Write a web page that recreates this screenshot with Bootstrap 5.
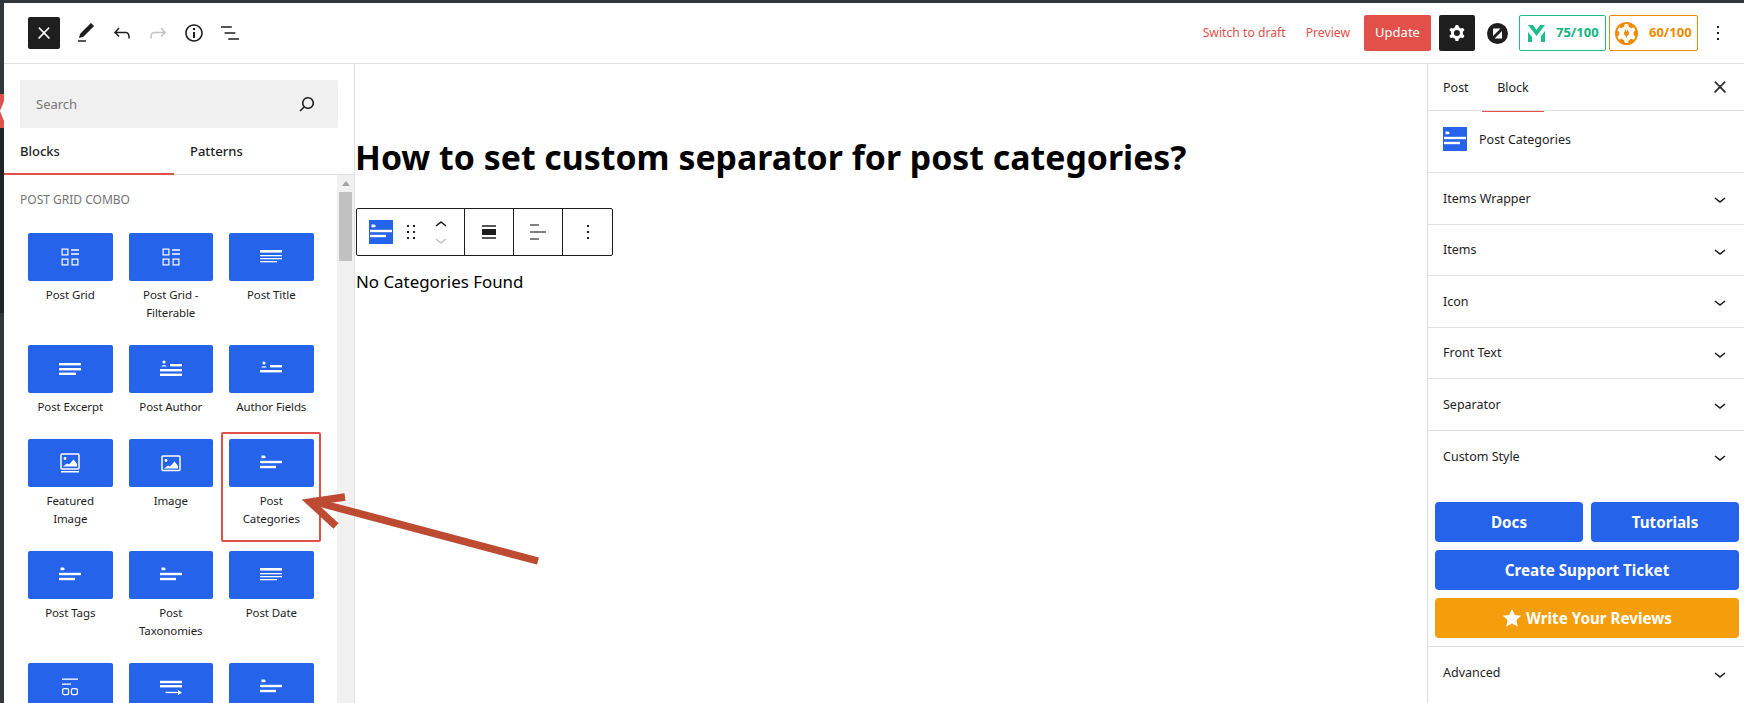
<!DOCTYPE html>
<html lang="en">
<head>
<meta charset="UTF-8">
<title>Edit Post</title>
<link href="https://cdn.jsdelivr.net/npm/bootstrap@5.3.0/dist/css/bootstrap.min.css" rel="stylesheet">
<style>
html, body { height: 703px; overflow: hidden; }
body { font-family: "Noto Sans", "Liberation Sans", sans-serif; color: #1e1e1e; background: #fff; font-size: 13px; }
svg { display: block; flex: none; }
.shell { height: 703px; position: relative; }
.strip-top { height: 3px; background: #32373c; }
.strip-left { width: 4px; flex: none; background: #1e2327; }
.strip-a { height: 91px; background: #32373c; }
.strip-b { height: 34px; background: #e2504a; }
.strip-c { height: 185px; }
.strip-d { flex-grow: 1; background: #32373c; }
.workspace { height: 700px; }
.editor { min-width: 0; }
.topbar { height: 61px; border-bottom: 1px solid #e0e0e0; padding-left: 24px; padding-right: 14px; }
.tool-close { width: 32px; height: 32px; background: #1e1e1e; border-radius: 2px; }
.tool-icon { margin-left: 12px; }
.tool-close + .tool-icon { margin-left: 14px; }
.close-bold { stroke-width: .9px; }
.link-red { color: #e2504a; font-size: 12.2px; text-decoration: none; }
.link-gap { margin-left: 20px; }
.btn-update { background: #e2504a; color: #fff; font-size: 13px; width: 67px; height: 36px; border-radius: 2px; padding: 0; border: 0; margin-left: 14px; }
.btn-cog { background: #1e1e1e; width: 36px; height: 36px; border-radius: 2px; padding: 0; border: 0; }
.circle-logo { margin: 0 11px 0 12px; }
.score-box { height: 36px; border-radius: 2px; font-size: 13px; font-weight: 700; background: #fff; gap: 11px; }
.score-green { width: 87px; border: 1px solid #1cbf8a; color: #13b583; padding-left: 8px; }
.score-orange { width: 89px; border: 1px solid #f08a00; color: #f08a00; padding-left: 5px; margin-left: 3px; }
.panels { height: 639px; min-height: 0; }
.inserter { width: 351px; flex: none; border-right: 1px solid #e0e0e0; }
.search-box { margin: 16px 16px 0; height: 48px; background: #f0f0f0; border-radius: 2px; padding: 0 19px 0 16px; color: #757575; }
.search-box span { padding-top: 2px; }
.tab-row { height: 47px; border-bottom: 1px solid #e0e0e0; }
.tab-left { width: 170px; padding-left: 16px; font-weight: 500; height: 47px; line-height: 47px; margin-bottom: -1px; }
.tab-active { border-bottom: 2px solid #e2504a; }
.tab-right { width: 175px; height: 47px; line-height: 47px; font-weight: 500; }
.tab-right span { display: block; padding-left: 16px; }
.block-scroll { min-height: 0; overflow: hidden; }
.block-list { padding: 17px 0 0 24px; min-width: 0; }
.cat-title { font-size: 12px; color: #757575; margin: 0 0 25px -8px; line-height: 16px; text-transform: uppercase; }
.block-grid { display: grid; grid-template-columns: repeat(3, 84.5px); column-gap: 16px; row-gap: 23px; }
.block-tile { height: 48px; background: #2563eb; border-radius: 2px; }
.block-label { font-size: 11.5px; letter-spacing: -.1px; line-height: 18px; margin-top: 5px; padding: 0 6px; text-align: center; }
.fake-scroll { width: 17px; flex: none; background: #f1f1f1; }
.fake-up { height: 17px; }
.fake-thumb { height: 69px; margin: 0 2px; background: #c1c1c1; }
.canvas { min-width: 0; }
.post-title { font-size: 33.85px; font-weight: 700; color: #000; line-height: 46px; margin: 70px 0 0 0; }
.block-bar { width: 257px; height: 48px; margin: 28px 0 0 1px; border: 1px solid #1e1e1e; border-radius: 2px; }
.bar-group { height: 100%; border-right: 1px solid #1e1e1e; }
.bar-group:last-child { border-right: 0; }
.bar-first { width: 108px; padding-left: 12px; }
.bar-cell { width: 49px; }
.drag-icon { margin-left: 6px; }
.mover { margin-left: 6px; }
.mover svg + svg { margin-top: -9px; }
.post-text { font-size: 16.9px; color: #000; margin: 13px 0 0 1px; line-height: 26px; }
.sidebar { width: 317px; flex: none; border-left: 1px solid #e0e0e0; }
.side-tabs { height: 47px; border-bottom: 1px solid #e0e0e0; padding-right: 15px; }
.side-tab { height: 47px; line-height: 47px; font-size: 12.5px; }
.side-post { padding-left: 15px; width: 54px; }
.side-block { width: 62px; text-align: center; border-bottom: 1px solid #e2504a; margin-bottom: -1px; height: 48px; }
.side-head { height: 62px; border-bottom: 1px solid #e0e0e0; padding: 0 0 5px 15px; }
.side-head span { margin-left: 12px; padding-top: 2px; font-size: 12.5px; }
.pick-tile { width: 24px; height: 24px; background: #2563eb; }
.panel-row.list-group-item { height: 51.5px; padding: 2px 12px 0 15px; border: 0; border-bottom: 1px solid #e0e0e0; color: #1e1e1e; font-size: 12.5px; border-radius: 0; }
.panel-row.row-plain { border-bottom: 0; }
.side-btns { padding: 20px 5px 8px 7px; border-bottom: 1px solid #e0e0e0; }
.btn-side { height: 40px; background: #2563eb; color: #fff; font-weight: 700; font-size: 15.200px; border: 0; border-radius: 4px; padding: 0; line-height: 40px; }
.btn-half { flex: 1 1 0; }
.btn-amber { background: #f59e0b; }
.btn-side:hover { color: #fff; }
.red-frame { position: absolute; left: 221px; top: 432px; width: 100px; height: 110px; border: 2px solid #e2504a; border-radius: 2px; pointer-events: none; }
.arrow-over { position: absolute; left: 290px; top: 480px; pointer-events: none; }
.strip-x { position: absolute; left: 0; top: 94px; pointer-events: none; }
</style>
</head>
<body>
<svg width="0" height="0" class="position-absolute">
  <defs>
    <symbol id="i-close" viewBox="0 0 24 24"><path d="M13 11.8l6.1-6.3-1-1-6.1 6.2-6.1-6.2-1 1 6.1 6.3-6.5 6.7 1 1 6.5-6.6 6.5 6.6 1-1z"/></symbol>
    <symbol id="i-edit" viewBox="0 0 24 24"><path d="M20.1 5.1L16.9 2 6.2 12.7l-1.3 4.4 4.5-1.3L20.1 5.1zM4 20.8h8v-1.5H4v1.5z"/></symbol>
    <symbol id="i-undo" viewBox="0 0 24 24"><path d="M18.3 11.7c-.6-.6-1.4-.9-2.3-.9H6.7l2.9-3.3-1.1-1-4.5 5L8.5 16l1-1-2.7-2.7H16c.5 0 .9.2 1.3.5 1 1 1 3.4 1 4.5v.3h1.5v-.2c0-1.5 0-4.3-1.5-5.7z"/></symbol>
    <symbol id="i-redo" viewBox="0 0 24 24"><path d="M15.6 6.5l-1.1 1 2.9 3.3H8c-.9 0-1.7.3-2.3.9-1.4 1.5-1.4 4.2-1.4 5.6v.2h1.5v-.3c0-1.1 0-3.5 1-4.5.3-.3.7-.5 1.3-.5h9.2L14.5 15l1.1 1.1 4.6-4.6-4.6-5z"/></symbol>
    <symbol id="i-info" viewBox="0 0 24 24"><path d="M12 3.2c-4.8 0-8.8 3.9-8.8 8.8 0 4.8 3.9 8.8 8.8 8.8 4.8 0 8.8-3.9 8.8-8.8 0-4.8-4-8.8-8.8-8.8zm0 16c-4 0-7.2-3.3-7.2-7.2C4.8 8 8 4.8 12 4.8s7.2 3.3 7.2 7.2c0 4-3.2 7.2-7.2 7.2zM11 17h2v-6h-2v6zm0-8h2V7h-2v2z"/></symbol>
    <symbol id="i-list" viewBox="0 0 24 24"><path d="M13.8 5.2H3v1.5h10.8V5.2zm-3.6 12v1.5H21v-1.5H10.2zm7.2-6H6.6v1.5h10.8v-1.5z"/></symbol>
    <symbol id="i-search" viewBox="0 0 24 24"><path d="M13 5c-3.3 0-6 2.7-6 6 0 1.4.5 2.7 1.3 3.7l-3.8 3.8 1.1 1.1 3.8-3.8c1 .8 2.3 1.3 3.7 1.3 3.3 0 6-2.7 6-6S16.3 5 13 5zm0 10.5c-2.5 0-4.5-2-4.5-4.5s2-4.5 4.5-4.5 4.5 2 4.5 4.5-2 4.5-4.5 4.5z"/></symbol>
    <symbol id="i-cog" viewBox="0 0 24 24"><path fill-rule="evenodd" d="M10.289 4.836A1 1 0 0111.275 4h1.306a1 1 0 01.987.836l.244 1.466c.787.26 1.503.679 2.108 1.218l1.393-.522a1 1 0 011.216.437l.653 1.13a1 1 0 01-.23 1.273l-1.148.944a6.025 6.025 0 010 2.435l1.149.946a1 1 0 01.23 1.272l-.653 1.13a1 1 0 01-1.216.437l-1.394-.522c-.605.54-1.32.958-2.108 1.218l-.244 1.466a1 1 0 01-.987.836h-1.306a1 1 0 01-.986-.836l-.244-1.466a5.995 5.995 0 01-2.108-1.218l-1.394.522a1 1 0 01-1.217-.436l-.653-1.131a1 1 0 01.23-1.272l1.149-.946a6.026 6.026 0 010-2.435l-1.148-.944a1 1 0 01-.23-1.272l.653-1.131a1 1 0 011.217-.437l1.393.522a5.994 5.994 0 012.108-1.218l.244-1.466zM14.929 12a3 3 0 11-6 0 3 3 0 016 0z"/></symbol>
    <symbol id="i-more" viewBox="0 0 24 24"><path d="M13 19h-2v-2h2v2zm0-6h-2v-2h2v2zm0-6h-2V5h2v2z"/></symbol>
    <symbol id="i-down" viewBox="0 0 24 24"><path d="M17.5 11.6L12 16l-5.500-4.400.9-1.200L12 14l4.500-3.600 1 1.200z"/></symbol>
    <symbol id="i-up" viewBox="0 0 24 24"><path d="M6.500 12.400L12 8l5.500 4.400-.9 1.200L12 10l-4.500 3.600-1-1.200z"/></symbol>
    <symbol id="i-drag" viewBox="0 0 24 24"><path d="M8 7h2V5H8v2zm0 6h2v-2H8v2zm0 6h2v-2H8v2zm6-14v2h2V5h-2zm0 8h2v-2h-2v2zm0 6h2v-2h-2v2z"/></symbol>
    <symbol id="i-wide" viewBox="0 0 24 24"><path d="M5 5.200h14v1.500H5zM5 17.300h14v1.500H5zM5 9h14v6H5z"/></symbol>
    <symbol id="i-left" viewBox="0 0 24 24"><path d="M4 19.800h8.900v-1.500H4v1.500zm8.900-15.600H4v1.500h8.900V4.200zm-8.900 7v1.500h16v-1.500H4z"/></symbol>
    <symbol id="t-grid" viewBox="0 0 24 24" fill="none" stroke="#fff" stroke-width="1.200"><rect x="4.100" y="4.100" width="5.800" height="5.800"/><rect x="4.100" y="14.100" width="5.800" height="5.800"/><rect x="14.100" y="14.100" width="5.800" height="5.800"/><path d="M13 5h8M13 9h8" stroke-width="1.400"/></symbol>
    <symbol id="t-title" viewBox="0 0 24 24" fill="#fff"><rect x="1" y="5" width="22" height="2.600"/><rect x="1" y="10" width="22" height="1.300"/><rect x="1" y="13" width="22" height="1.300"/><rect x="1" y="16" width="17" height="1.300"/></symbol>
    <symbol id="t-excerpt" viewBox="0 0 24 24" fill="#fff"><rect x="1" y="6" width="22" height="2.400"/><rect x="1" y="11" width="22" height="2.400"/><rect x="1" y="15.600" width="17" height="2.400"/></symbol>
    <symbol id="t-author" viewBox="0 0 24 24" fill="#fff"><circle cx="5" cy="5" r="1.600"/><path d="M2.400 9.500c0-1.800 5.200-1.800 5.200 0z"/><rect x="11" y="7" width="12" height="2.400"/><rect x="1" y="12" width="22" height="2.400"/><rect x="1" y="16.600" width="22" height="2.400"/></symbol>
    <symbol id="t-fields" viewBox="0 0 24 24" fill="#fff"><circle cx="5" cy="6" r="1.600"/><path d="M2.400 10.500c0-1.800 5.200-1.800 5.200 0z"/><rect x="11" y="8" width="12" height="2.400"/><rect x="1" y="13" width="22" height="2.400"/></symbol>
    <symbol id="t-feat" viewBox="0 0 24 24"><rect x="3" y="3" width="18" height="15" rx="1" fill="none" stroke="#fff" stroke-width="1.500"/><circle cx="7" cy="7.500" r="1.400" fill="#fff"/><path d="M5 15.500l4-3 2 1 4.500-5 3.500 4.500v2.500z" fill="#fff"/><rect x="3" y="20" width="18" height="1.500" fill="#fff"/></symbol>
    <symbol id="t-image" viewBox="0 0 24 24"><rect x="3" y="5" width="18" height="14.500" rx="1" fill="none" stroke="#fff" stroke-width="1.500"/><circle cx="7" cy="9.500" r="1.400" fill="#fff"/><path d="M5 17.500l4-3 2 1 4.500-5 3.500 4.500v2.500z" fill="#fff"/></symbol>
    <symbol id="t-cats" viewBox="0 0 24 24" fill="#fff"><path d="M2.500 4.500h3l1.500 1.700-1.500 1h-3z"/><rect x="1" y="9.800" width="22" height="2.400"/><rect x="1" y="14.800" width="16" height="2.400"/></symbol>
    <symbol id="t-query" viewBox="0 0 24 24"><rect x="4" y="3.500" width="16" height="1.300" fill="#fff"/><rect x="4" y="8.500" width="9" height="1.300" fill="#fff"/><rect x="4.600" y="13.600" width="6" height="6" rx="1.600" fill="none" stroke="#fff" stroke-width="1.300"/><rect x="13.400" y="13.600" width="6" height="6" rx="1.600" fill="none" stroke="#fff" stroke-width="1.300"/></symbol>
    <symbol id="t-next" viewBox="0 0 24 24" fill="#fff"><rect x="1" y="5.800" width="22" height="2.400"/><rect x="1" y="10" width="22" height="2.400"/><rect x="6.500" y="16.800" width="14" height="1.300"/><path d="M19 15l4 2.500-4 2.500z"/></symbol>
  </defs>
</svg>

<div class="shell d-flex flex-column">
  <div class="strip-top"></div>
  <div class="workspace d-flex">
    <div class="strip-left d-flex flex-column">
      <div class="strip-a"></div>
      <div class="strip-b"></div>
      <div class="strip-c"></div>
      <div class="strip-d"></div>
    </div>
    <div class="editor flex-grow-1 d-flex flex-column">
      <div class="topbar d-flex align-items-center flex-shrink-0">
        <button class="tool-close btn d-flex align-items-center justify-content-center p-0 border-0"><svg class="close-bold" width="18" height="18" fill="#fff" stroke="#fff"><use href="#i-close"/></svg></button>
        <svg class="tool-icon" width="24" height="24" fill="#1e1e1e"><use href="#i-edit"/></svg>
        <svg class="tool-icon" width="24" height="24" fill="#1e1e1e"><use href="#i-undo"/></svg>
        <svg class="tool-icon" width="24" height="24" fill="#c4c4c4"><use href="#i-redo"/></svg>
        <svg class="tool-icon" width="24" height="24" fill="#1e1e1e"><use href="#i-info"/></svg>
        <svg class="tool-icon" width="24" height="24" fill="#1e1e1e"><use href="#i-list"/></svg>
        <div class="ms-auto d-flex align-items-center">
          <a class="link-red" href="#">Switch to draft</a>
          <a class="link-red link-gap" href="#">Preview</a>
          <button class="btn btn-update">Update</button>
          <button class="btn btn-cog ms-2 d-flex align-items-center justify-content-center"><svg width="24" height="24" fill="#fff"><use href="#i-cog"/></svg></button>
          <svg class="circle-logo" width="21" height="21" viewBox="0 0 21 21"><circle cx="10.500" cy="10.500" r="10.500" fill="#1e1e1e"/><path d="M6 5.500h7.500L6 13zM15 8v7.500H7.500z" fill="#fff"/></svg>
          <div class="score-box score-green d-flex align-items-center">
            <svg width="17" height="17" viewBox="0 0 17 17"><path d="M0 0h5l3.500 5L12 0h5L8.500 11z" fill="#1cbf8a"/><path d="M0 7l4 5v5H0zM17 6v11h-4v-6z" fill="#1cbf8a"/></svg><span>75/100</span>
          </div>
          <div class="score-box score-orange d-flex align-items-center">
            <svg width="23" height="23" viewBox="0 0 24 24"><circle cx="12" cy="12" r="12" fill="#f08a00"/><use href="#i-cog" x="-3" y="-3" width="30" height="30" fill="#fff"/><circle cx="12" cy="12" r="5" fill="#fff"/><path d="M9.500 10h5v2.200a2.500 2.500 0 01-5 0zM10.400 8h1v2h-1zM12.600 8h1v2h-1zM11.500 14h1v2.500h-1z" fill="#f08a00"/></svg><span>60/100</span>
          </div>
          <svg class="ms-2" width="24" height="24" fill="#1e1e1e"><use href="#i-more"/></svg>
        </div>
      </div>

      <div class="panels d-flex flex-grow-1">
        <div class="inserter d-flex flex-column">
          <div class="search-box d-flex align-items-center justify-content-between flex-shrink-0">
            <span>Search</span>
            <svg width="24" height="24" fill="#1e1e1e"><use href="#i-search"/></svg>
          </div>
          <div class="tab-row d-flex flex-shrink-0">
            <div class="tab-left tab-active">Blocks</div>
            <div class="tab-right"><span>Patterns</span></div>
          </div>
          <div class="block-scroll d-flex flex-grow-1">
            <div class="block-list flex-grow-1">
              <div class="cat-title">Post Grid Combo</div>
              <div class="block-grid">
                <div><div class="block-tile d-flex align-items-center justify-content-center"><svg width="24" height="24"><use href="#t-grid"/></svg></div><div class="block-label">Post Grid</div></div>
                <div><div class="block-tile d-flex align-items-center justify-content-center"><svg width="24" height="24"><use href="#t-grid"/></svg></div><div class="block-label">Post Grid - Filterable</div></div>
                <div><div class="block-tile d-flex align-items-center justify-content-center"><svg width="24" height="24"><use href="#t-title"/></svg></div><div class="block-label">Post Title</div></div>
                <div><div class="block-tile d-flex align-items-center justify-content-center"><svg width="24" height="24"><use href="#t-excerpt"/></svg></div><div class="block-label">Post Excerpt</div></div>
                <div><div class="block-tile d-flex align-items-center justify-content-center"><svg width="24" height="24"><use href="#t-author"/></svg></div><div class="block-label">Post Author</div></div>
                <div><div class="block-tile d-flex align-items-center justify-content-center"><svg width="24" height="24"><use href="#t-fields"/></svg></div><div class="block-label">Author Fields</div></div>
                <div><div class="block-tile d-flex align-items-center justify-content-center"><svg width="24" height="24"><use href="#t-feat"/></svg></div><div class="block-label">Featured Image</div></div>
                <div><div class="block-tile d-flex align-items-center justify-content-center"><svg width="24" height="24"><use href="#t-image"/></svg></div><div class="block-label">Image</div></div>
                <div><div class="block-tile d-flex align-items-center justify-content-center"><svg width="24" height="24"><use href="#t-cats"/></svg></div><div class="block-label">Post Categories</div></div>
                <div><div class="block-tile d-flex align-items-center justify-content-center"><svg width="24" height="24"><use href="#t-cats"/></svg></div><div class="block-label">Post Tags</div></div>
                <div><div class="block-tile d-flex align-items-center justify-content-center"><svg width="24" height="24"><use href="#t-cats"/></svg></div><div class="block-label">Post Taxonomies</div></div>
                <div><div class="block-tile d-flex align-items-center justify-content-center"><svg width="24" height="24"><use href="#t-title"/></svg></div><div class="block-label">Post Date</div></div>
                <div><div class="block-tile d-flex align-items-center justify-content-center"><svg width="24" height="24"><use href="#t-query"/></svg></div></div>
                <div><div class="block-tile d-flex align-items-center justify-content-center"><svg width="24" height="24"><use href="#t-next"/></svg></div></div>
                <div><div class="block-tile d-flex align-items-center justify-content-center"><svg width="24" height="24"><use href="#t-cats"/></svg></div></div>
              </div>
            </div>
            <div class="fake-scroll">
              <div class="fake-up d-flex justify-content-center align-items-center"><svg width="8" height="5" viewBox="0 0 8 5"><path d="M4 0l4 5H0z" fill="#a3a3a3"/></svg></div>
              <div class="fake-thumb"></div>
            </div>
          </div>
        </div>

        <div class="canvas flex-grow-1">
          <h1 class="post-title">How to set custom separator for post categories?</h1>
          <div class="block-bar d-flex bg-white">
            <div class="bar-group bar-first d-flex align-items-center">
              <div class="pick-tile d-flex align-items-center justify-content-center"><svg width="24" height="24"><use href="#t-cats"/></svg></div>
              <svg class="drag-icon" width="24" height="24" fill="#1e1e1e"><use href="#i-drag"/></svg>
              <div class="mover"><svg width="24" height="24" fill="#1e1e1e"><use href="#i-up"/></svg><svg width="24" height="24" fill="#c4c4c4"><use href="#i-down"/></svg></div>
            </div>
            <div class="bar-group bar-cell d-flex align-items-center justify-content-center"><svg width="24" height="24" fill="#1e1e1e"><use href="#i-wide"/></svg></div>
            <div class="bar-group bar-cell d-flex align-items-center justify-content-center"><svg width="24" height="24" fill="#555"><use href="#i-left"/></svg></div>
            <div class="bar-group bar-cell d-flex align-items-center justify-content-center"><svg width="24" height="24" fill="#1e1e1e"><use href="#i-more"/></svg></div>
          </div>
          <p class="post-text">No Categories Found</p>
        </div>

        <div class="sidebar">
          <div class="side-tabs d-flex">
            <div class="side-tab side-post">Post</div>
            <div class="side-tab side-block">Block</div>
            <svg class="ms-auto align-self-center close-bold" width="18" height="18" fill="#1e1e1e" stroke="#1e1e1e"><use href="#i-close"/></svg>
          </div>
          <div class="side-head d-flex align-items-center">
            <div class="pick-tile d-flex align-items-center justify-content-center"><svg width="24" height="24"><use href="#t-cats"/></svg></div>
            <span>Post Categories</span>
          </div>
          <div class="list-group list-group-flush">
            <div class="list-group-item panel-row d-flex align-items-center justify-content-between">Items Wrapper<svg width="24" height="24" fill="#1e1e1e"><use href="#i-down"/></svg></div>
            <div class="list-group-item panel-row d-flex align-items-center justify-content-between">Items<svg width="24" height="24" fill="#1e1e1e"><use href="#i-down"/></svg></div>
            <div class="list-group-item panel-row d-flex align-items-center justify-content-between">Icon<svg width="24" height="24" fill="#1e1e1e"><use href="#i-down"/></svg></div>
            <div class="list-group-item panel-row d-flex align-items-center justify-content-between">Front Text<svg width="24" height="24" fill="#1e1e1e"><use href="#i-down"/></svg></div>
            <div class="list-group-item panel-row d-flex align-items-center justify-content-between">Separator<svg width="24" height="24" fill="#1e1e1e"><use href="#i-down"/></svg></div>
            <div class="list-group-item panel-row row-plain d-flex align-items-center justify-content-between">Custom Style<svg width="24" height="24" fill="#1e1e1e"><use href="#i-down"/></svg></div>
          </div>
          <div class="side-btns d-flex flex-column gap-2">
            <div class="d-flex gap-2">
              <a class="btn btn-side btn-half" href="#">Docs</a>
              <a class="btn btn-side btn-half" href="#">Tutorials</a>
            </div>
            <a class="btn btn-side" href="#">Create Support Ticket</a>
            <a class="btn btn-side btn-amber d-flex align-items-center justify-content-center gap-1" href="#"><svg width="20" height="20" viewBox="0 0 20 20"><path d="M10 1l2.800 5.900 6.400.8-4.700 4.400 1.200 6.400L10 15.400 4.300 18.500l1.200-6.400L.8 7.700l6.400-.8z" fill="#fff"/></svg>Write Your Reviews</a>
          </div>
          <div class="list-group-item panel-row row-plain d-flex align-items-center justify-content-between">Advanced<svg width="24" height="24" fill="#1e1e1e"><use href="#i-down"/></svg></div>
        </div>
      </div>
    </div>
  </div>

  <svg class="strip-x" width="4" height="34" viewBox="0 0 4 34"><path d="M4 7L0 17l4 10z" fill="#fff"/></svg>
  <div class="red-frame"></div>
  <svg class="arrow-over" width="260" height="100" viewBox="290 480 260 100">
    <path d="M538 561L312 501" stroke="#bd4b32" stroke-width="7.500" fill="none"/>
    <path d="M345 497L310 502L336 526" stroke="#bd4b32" stroke-width="7.500" fill="none"/>
  </svg>
</div>
</body>
</html>
